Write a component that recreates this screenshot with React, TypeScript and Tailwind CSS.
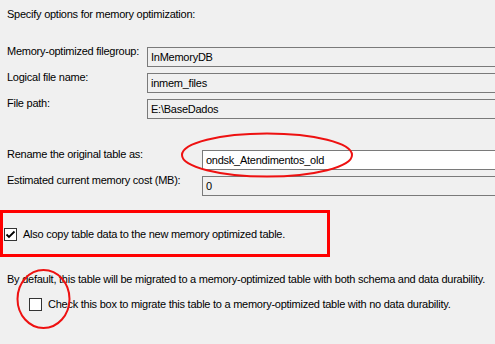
import React from 'react';

const Campo = ({ valor, branco = false }: { valor: string; branco?: boolean }) => (
  <div
    className={`flex-1 h-[20px] flex items-center pl-[3px] border-y border-l border-[#7a7a7a] ${
      branco ? 'bg-white' : 'bg-[#f0f0f0]'
    }`}
  >
    {valor}
  </div>
);

const Linha = ({ rotulo, children, inicio }: { rotulo: string; children: React.ReactNode; inicio: string }) => (
  <div className="flex items-start">
    <div className={`${inicio} shrink-0 -mt-[2px] leading-[13px]`}>{rotulo}</div>
    {children}
  </div>
);

const Caixa = ({ marcada }: { marcada?: boolean }) => (
  <div className="w-[13px] h-[13px] shrink-0 border border-[#333333] bg-white flex items-center justify-center">
    {marcada && (
      <svg width="11" height="11" viewBox="0 0 11 11">
        <path d="M1.5 5.5 L4 8 L9.5 2.5" fill="none" stroke="#000" strokeWidth="1.8" />
      </svg>
    )}
  </div>
);

export default function App() {
  return (
    <div
      className="relative w-[495px] h-[344px] overflow-hidden bg-[#f0f0f0] text-black text-[11px] leading-[13px] tracking-[-0.25px] whitespace-nowrap"
      style={{ fontFamily: '"Liberation Sans", Arial, sans-serif' }}
    >
      <div className="pt-[8px] pl-[7px]">Specify options for memory optimization:</div>

      <div className="mt-[26px] pl-[7px] flex flex-col gap-[6px]">
        <Linha rotulo="Memory-optimized filegroup:" inicio="w-[140px]">
          <Campo valor="InMemoryDB" />
        </Linha>
        <Linha rotulo="Logical file name:" inicio="w-[140px]">
          <Campo valor="inmem_files" />
        </Linha>
        <Linha rotulo="File path:" inicio="w-[140px]">
          <Campo valor="E:\BaseDados" />
        </Linha>
      </div>

      <div className="mt-[31px] pl-[7px] flex flex-col gap-[6px]">
        <Linha rotulo="Rename the original table as:" inicio="w-[195px]">
          <Campo valor="ondsk_Atendimentos_old" branco />
        </Linha>
        <Linha rotulo="Estimated current memory cost (MB):" inicio="w-[195px]">
          <Campo valor="0" />
        </Linha>
      </div>

      <div className="mt-[14px] w-[330px] h-[47px] border-[3px] border-[#ff0000] flex items-center gap-[6px] pl-[1px] pt-[1px]">
        <Caixa marcada />
        <span>Also copy table data to the new memory optimized table.</span>
      </div>

      <div className="mt-[16px] pl-[7px]">
        By default, this table will be migrated to a memory-optimized table with both schema and data durability.
      </div>
      <div className="mt-[12px] pl-[29px] flex items-center gap-[6px]">
        <Caixa />
        <span>Check this box to migrate this table to a memory-optimized table with no data durability.</span>
      </div>

      <svg className="absolute inset-0 pointer-events-none" width="495" height="344">
        <ellipse cx="267" cy="155" rx="85" ry="21.5" fill="none" stroke="#ee1111" strokeWidth="2" />
        <ellipse cx="43.5" cy="299" rx="26" ry="29" fill="none" stroke="#ee1111" strokeWidth="2" />
      </svg>
    </div>
  );
}
